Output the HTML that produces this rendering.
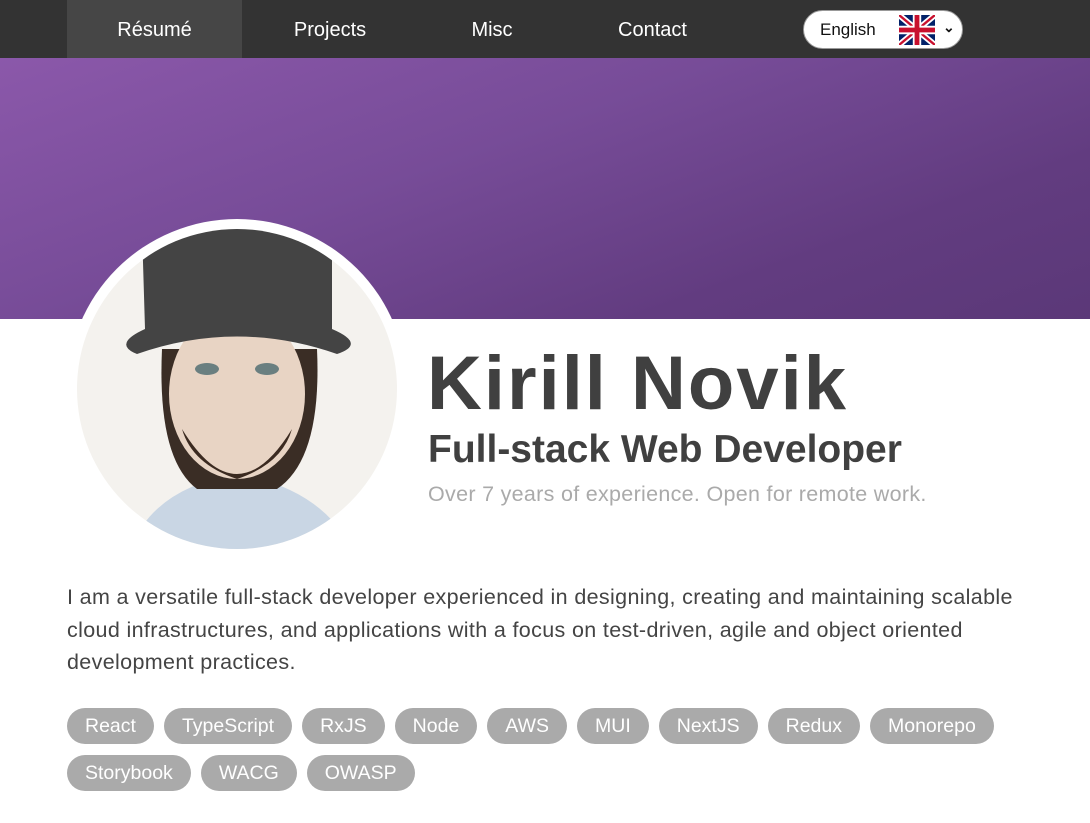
<!DOCTYPE html>
<html><head><meta charset="utf-8"><style>
*{margin:0;padding:0;box-sizing:border-box}
body{width:1090px;height:823px;overflow:hidden;background:#fff;font-family:"Liberation Sans",sans-serif;color:#444;position:relative}
nav{position:absolute;left:0;top:0;width:1090px;height:58px;background:#333}
nav a{position:absolute;top:0;height:58px;line-height:60px;color:#fff;font-size:20px;text-align:center;text-decoration:none}
.lang{position:absolute;left:803px;top:10px;width:160px;height:39px;border-radius:20px;background:#fff;border:1px solid #999}
.hero{position:absolute;left:0;top:58px;width:1090px;height:261px;background:linear-gradient(160deg,#8b58aa 0%,#774c98 40%,#623c80 75%,#5b3878 100%)}
.av{position:absolute;left:67px;top:219px;width:340px;height:340px;border-radius:50%;background:#fff;overflow:hidden}
h1{position:absolute;left:427px;top:340px;font-size:76px;font-weight:bold;color:#404040;letter-spacing:2px}
h2{position:absolute;left:428px;top:428px;font-size:39px;font-weight:bold;color:#404040}
.sub{position:absolute;left:428px;top:482px;font-size:21.5px;color:#aaa;letter-spacing:0.3px}
p{position:absolute;left:67px;top:581px;width:1000px;font-size:21.5px;line-height:32.5px;color:#444;letter-spacing:0.35px}
.tags{position:absolute;left:67px;top:708px;width:1000px}
.tags span{display:inline-block;height:36px;line-height:37px;padding:0 18px;margin:0 10px 11px 0;border-radius:18px;background:#aaa;color:#fff;font-size:19.5px;float:left}
</style></head><body>
<nav>
<a style="left:67px;width:175px;background:#464646">Résumé</a>
<a style="left:280px;width:100px">Projects</a>
<a style="left:452px;width:80px">Misc</a>
<a style="left:605px;width:95px">Contact</a>
<div class="lang"><span style="position:absolute;left:16px;top:9px;font-size:17px;color:#111">English</span>
<svg style="position:absolute;left:95px;top:4px" width="36" height="30" viewBox="0 0 60 50"><rect width="60" height="50" fill="#012169"/><path d="M0 0L60 50M60 0L0 50" stroke="#fff" stroke-width="10"/><path d="M0 0L60 50M60 0L0 50" stroke="#C8102E" stroke-width="4"/><path d="M30 0V50M0 25H60" stroke="#fff" stroke-width="14"/><path d="M30 0V50M0 25H60" stroke="#C8102E" stroke-width="8"/></svg>
<span style="position:absolute;left:139px;top:8px;font-size:14px;color:#111;font-weight:bold">⌄</span></div>
</nav>
<div class="hero"></div>
<div class="av">
<svg width="340" height="340" viewBox="0 0 340 340"><circle cx="170" cy="170" r="160" fill="#f4f2ee"/>
<clipPath id="c"><circle cx="170" cy="170" r="160"/></clipPath>
<g clip-path="url(#c)">
<path d="M60 340 Q80 270 170 255 Q260 270 290 340Z" fill="#c9d6e4"/>
<path d="M95 130 Q90 240 130 270 L210 270 Q255 240 250 130Z" fill="#3a2d25"/>
<ellipse cx="170" cy="175" rx="68" ry="85" fill="#e8d4c4"/>
<path d="M115 210 Q170 300 225 210 Q215 245 170 260 Q125 245 115 210Z" fill="#3b2a20"/>
<ellipse cx="140" cy="150" rx="12" ry="6" fill="#6a7f80"/><ellipse cx="200" cy="150" rx="12" ry="6" fill="#6a7f80"/>
<path d="M75 10 L265 10 L265 110 Q300 125 270 135 Q170 100 70 135 Q45 125 78 110Z" fill="#444"/>
</g></svg>
</div>
<h1>Kirill Novik</h1>
<h2>Full-stack Web Developer</h2>
<div class="sub">Over 7 years of experience. Open for remote work.</div>
<p>I am a versatile full-stack developer experienced in designing, creating and maintaining scalable<br>cloud infrastructures, and applications with a focus on test-driven, agile and object oriented<br>development practices.</p>
<div class="tags"><span>React</span><span>TypeScript</span><span>RxJS</span><span>Node</span><span>AWS</span><span>MUI</span><span>NextJS</span><span>Redux</span><span>Monorepo</span><span style="clear:left">Storybook</span><span>WACG</span><span>OWASP</span></div>
</body></html>
